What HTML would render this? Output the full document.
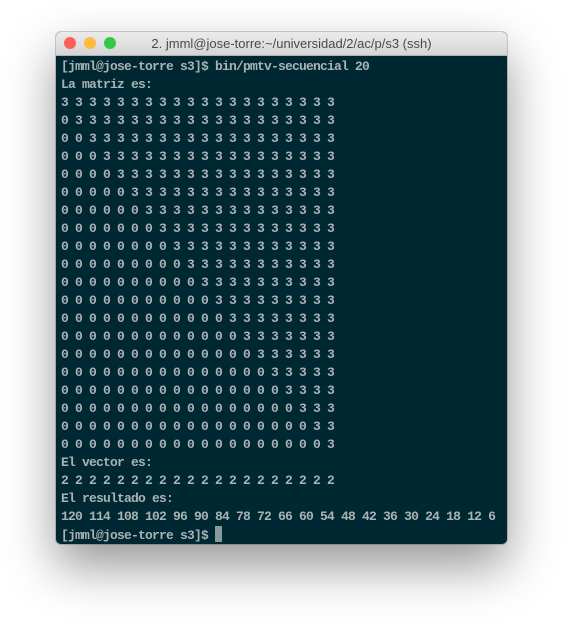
<!DOCTYPE html>
<html><head><style>
body{margin:0;width:563px;height:625px;background:#fff;position:relative;overflow:hidden}
.win{position:absolute;left:56px;top:32px;width:451px;height:512px;border-radius:5px;overflow:hidden;box-shadow:0 22px 50px rgba(0,0,0,.42),0 0 0 1px rgba(0,0,0,.18);background:#002833}
.tb{height:23px;background:linear-gradient(#ebebeb,#d5d5d5);border-bottom:1px solid #b1b1b1;position:relative;font:13px "Liberation Sans",sans-serif;color:#4a4a4a;text-align:center;line-height:23px}
.d{position:absolute;top:5px;width:12px;height:12px;border-radius:50%}
pre{margin:0;padding:2px 0 0 5px;font:bold 13px/18px "Liberation Mono",monospace;letter-spacing:-0.8px;color:#a8b3b4}
.cur{display:inline-block;width:7px;height:16px;background:#8a9a9c;vertical-align:-3px}
</style></head><body>
<div class="win">
<div class="tb"><span class="d" style="left:8px;background:#fc605b;border:0"></span><span class="d" style="left:28px;background:#fdbc40"></span><span class="d" style="left:48px;background:#34c84a"></span><span style="padding-left:20px">2. jmml@jose-torre:~/universidad/2/ac/p/s3 (ssh)</span></div>
<pre>[jmml@jose-torre s3]$ bin/pmtv-secuencial 20
La matriz es:
3 3 3 3 3 3 3 3 3 3 3 3 3 3 3 3 3 3 3 3
0 3 3 3 3 3 3 3 3 3 3 3 3 3 3 3 3 3 3 3
0 0 3 3 3 3 3 3 3 3 3 3 3 3 3 3 3 3 3 3
0 0 0 3 3 3 3 3 3 3 3 3 3 3 3 3 3 3 3 3
0 0 0 0 3 3 3 3 3 3 3 3 3 3 3 3 3 3 3 3
0 0 0 0 0 3 3 3 3 3 3 3 3 3 3 3 3 3 3 3
0 0 0 0 0 0 3 3 3 3 3 3 3 3 3 3 3 3 3 3
0 0 0 0 0 0 0 3 3 3 3 3 3 3 3 3 3 3 3 3
0 0 0 0 0 0 0 0 3 3 3 3 3 3 3 3 3 3 3 3
0 0 0 0 0 0 0 0 0 3 3 3 3 3 3 3 3 3 3 3
0 0 0 0 0 0 0 0 0 0 3 3 3 3 3 3 3 3 3 3
0 0 0 0 0 0 0 0 0 0 0 3 3 3 3 3 3 3 3 3
0 0 0 0 0 0 0 0 0 0 0 0 3 3 3 3 3 3 3 3
0 0 0 0 0 0 0 0 0 0 0 0 0 3 3 3 3 3 3 3
0 0 0 0 0 0 0 0 0 0 0 0 0 0 3 3 3 3 3 3
0 0 0 0 0 0 0 0 0 0 0 0 0 0 0 3 3 3 3 3
0 0 0 0 0 0 0 0 0 0 0 0 0 0 0 0 3 3 3 3
0 0 0 0 0 0 0 0 0 0 0 0 0 0 0 0 0 3 3 3
0 0 0 0 0 0 0 0 0 0 0 0 0 0 0 0 0 0 3 3
0 0 0 0 0 0 0 0 0 0 0 0 0 0 0 0 0 0 0 3
El vector es:
2 2 2 2 2 2 2 2 2 2 2 2 2 2 2 2 2 2 2 2
El resultado es:
120 114 108 102 96 90 84 78 72 66 60 54 48 42 36 30 24 18 12 6
[jmml@jose-torre s3]$ <span class="cur"></span></pre>
</div>
</body></html>
